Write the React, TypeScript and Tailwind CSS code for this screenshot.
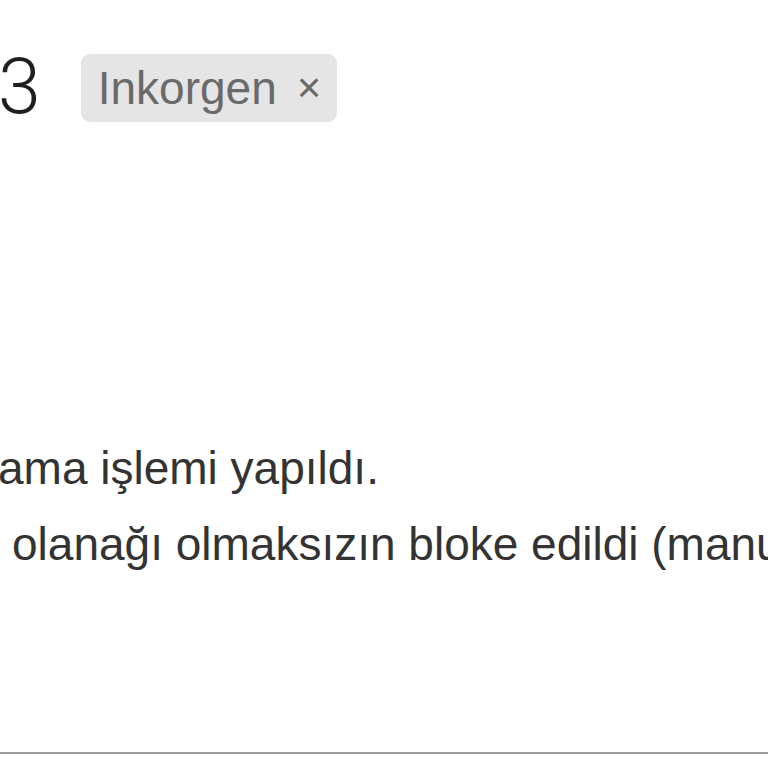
export default function App() {
  return (
    <div
      className="flex h-[768px] w-[768px] flex-col overflow-hidden bg-white text-[#333]"
      style={{ fontFamily: '"Liberation Sans", Arial, sans-serif' }}
    >
      {/* Title row */}
      <div className="flex items-center gap-[40px] pt-[49px]">
        <span
          className="-ml-[2px] text-[77px] font-light leading-none text-[#1f1f1f]"
          style={{ fontFamily: 'Roboto, "Liberation Sans", sans-serif' }}
        >
          3
        </span>
        <span className="flex h-[68px] items-center gap-[20px] rounded-[9px] bg-[#e5e5e5] pl-[17px] pr-[16px] text-[46px] leading-none text-[#6a6a6a]">
          Inkorgen
          <span className="text-[42px]">×</span>
        </span>
      </div>

      {/* Log lines */}
      <div className="mt-[304px] flex flex-col whitespace-nowrap text-[46px] leading-[76px]">
        <div className="-ml-[2px]">ama işlemi yapıldı.</div>
        <div className="ml-[12px]">olanağı olmaksızın bloke edildi (manuel)</div>
      </div>

      <div className="mt-auto mb-[14px] border-t-[2px] border-[#9c9c9c]" />
    </div>
  );
}
